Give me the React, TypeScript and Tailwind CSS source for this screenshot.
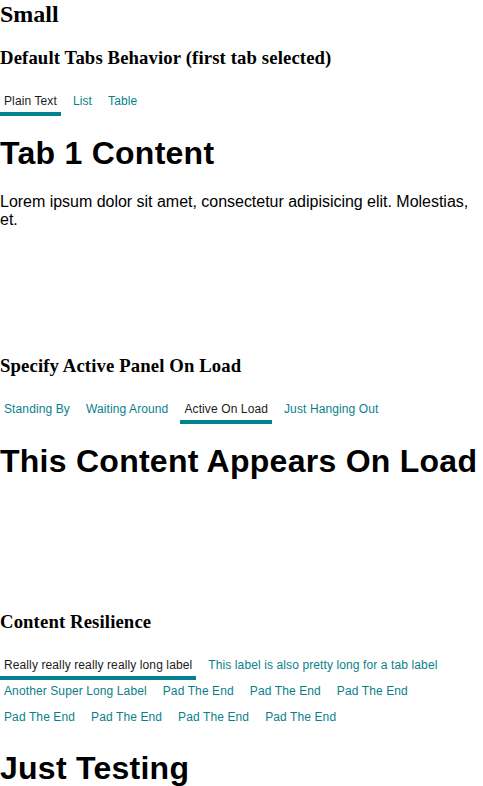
import React from "react";

const serif = { fontFamily: '"Liberation Serif", "Times New Roman", serif' };

function Tabs({ labels, active }: { labels: string[]; active: number }) {
  return (
    <div className="flex flex-wrap gap-x-[8px] font-['Liberation_Sans',Arial,sans-serif]">
      {labels.map((l, i) => (
        <div
          key={i}
          className={
            i === active
              ? "px-1 pt-1 pb-1 h-[26px] text-[12px] leading-[14px] tracking-[0.11px] border-b-4 border-[#02818e] text-[#1c1c1c] whitespace-nowrap"
              : "px-1 pt-1 pb-1 h-[26px] text-[12px] leading-[14px] tracking-[0.11px] border-b-4 border-transparent text-[#0a7f8c] whitespace-nowrap"
          }
        >
          {l}
        </div>
      ))}
    </div>
  );
}

export default function App() {
  return (
    <div className="flex flex-col bg-white text-black w-[483px] font-['Liberation_Sans',Arial,sans-serif]">
      <h2 style={serif} className="text-[24px] leading-[28px] font-bold">
        Small
      </h2>
      <h3 style={serif} className="mt-[19px] text-[18.72px] leading-[22px] font-bold tracking-[0.12px]">
        Default Tabs Behavior (first tab selected)
      </h3>
      <div className="mt-[21px]">
        <Tabs labels={["Plain Text", "List", "Table"]} active={0} />
      </div>
      <h1 className="mt-[19px] text-[32px] leading-[37px] font-bold tracking-[0.26px]">Tab 1 Content</h1>
      <p className="mt-[20.5px] text-[16px] leading-[18.4px] tracking-[-0.02px]">
        Lorem ipsum dolor sit amet, consectetur adipisicing elit. Molestias, et.
      </p>

      <h3 style={serif} className="mt-[125.6px] text-[18.72px] leading-[22px] font-bold tracking-[0.12px]">
        Specify Active Panel On Load
      </h3>
      <div className="mt-[21px]">
        <Tabs
          labels={["Standing By", "Waiting Around", "Active On Load", "Just Hanging Out"]}
          active={2}
        />
      </div>
      <h1 className="mt-[19px] text-[32px] leading-[37px] font-bold tracking-[0.26px] whitespace-nowrap">
        This Content Appears On Load
      </h1>

      <h3 style={serif} className="mt-[130.6px] text-[18.72px] leading-[22px] font-bold tracking-[0.12px]">
        Content Resilience
      </h3>
      <div className="mt-[21px]">
        <Tabs
          labels={[
            "Really really really really long label",
            "This label is also pretty long for a tab label",
            "Another Super Long Label",
            "Pad The End",
            "Pad The End",
            "Pad The End",
            "Pad The End",
            "Pad The End",
            "Pad The End",
            "Pad The End",
          ]}
          active={0}
        />
      </div>
      <h1 className="mt-[18px] text-[32px] leading-[37px] font-bold tracking-[0.26px]">Just Testing</h1>
    </div>
  );
}
